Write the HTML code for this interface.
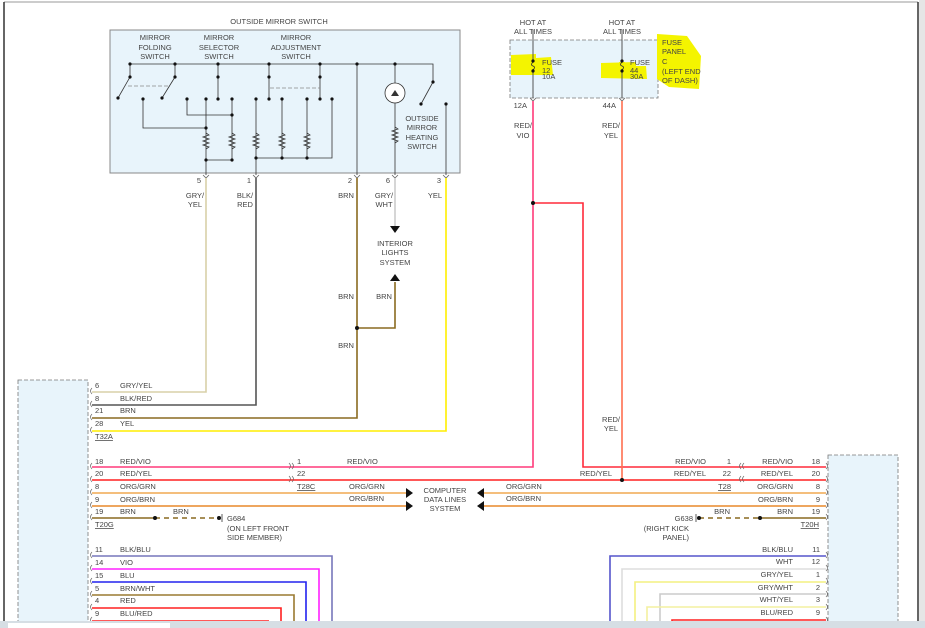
<!DOCTYPE html>
<html><head><meta charset="utf-8"><style>
html,body{margin:0;padding:0;background:#fff;width:925px;height:628px;overflow:hidden}
svg text{font-family:"Liberation Sans",sans-serif;font-size:7.5px;fill:#444}
</style></head><body>
<svg width="925" height="628" viewBox="0 0 925 628" xmlns="http://www.w3.org/2000/svg">
<rect x="0" y="0" width="925" height="628" fill="#fff"/>
<line x1="4" y1="2" x2="918" y2="2" stroke="#999" stroke-width="1"/>
<line x1="4" y1="2" x2="4" y2="628" stroke="#333" stroke-width="1.5"/>
<line x1="918" y1="2" x2="918" y2="628" stroke="#333" stroke-width="1.5"/>
<rect x="919" y="0" width="6" height="628" fill="#e6e6e6"/>

<!-- mirror switch box -->
<text x="279" y="24" text-anchor="middle">OUTSIDE MIRROR SWITCH</text>
<rect x="110" y="30" width="350" height="143" fill="#e8f4fb" stroke="#888" stroke-width="1"/>
<g text-anchor="middle">
<text x="155" y="40">MIRROR</text><text x="155" y="50">FOLDING</text><text x="155" y="59">SWITCH</text>
<text x="219" y="40">MIRROR</text><text x="219" y="50">SELECTOR</text><text x="219" y="59">SWITCH</text>
<text x="296" y="40">MIRROR</text><text x="296" y="50">ADJUSTMENT</text><text x="296" y="59">SWITCH</text>
<text x="422" y="121">OUTSIDE</text><text x="422" y="130">MIRROR</text><text x="422" y="140">HEATING</text><text x="422" y="149">SWITCH</text>
</g>
<g stroke="#333" stroke-width="0.8" fill="none">
<polyline points="130,77 130,64 433,64 433,82"/>
<line x1="175" y1="64" x2="175" y2="77"/>
<line x1="130" y1="77" x2="118" y2="98"/><line x1="175" y1="77" x2="162" y2="98"/>
<line x1="218" y1="64" x2="218" y2="100"/>
<line x1="269" y1="64" x2="269" y2="100"/>
<line x1="320" y1="64" x2="320" y2="100"/>
<line x1="357" y1="64" x2="357" y2="175"/>
<line x1="395" y1="64" x2="395" y2="175"/>
<line x1="433" y1="82" x2="421" y2="104"/>
<line x1="446" y1="104" x2="446" y2="175"/>
<polyline points="143,99 143,128 206,128"/>
<polyline points="187,99 187,115 232,115 232,99"/>
<line x1="206" y1="99" x2="206" y2="175"/>
<line x1="232" y1="115" x2="232" y2="160"/>
<line x1="206" y1="160" x2="232" y2="160"/>
<line x1="256" y1="99" x2="256" y2="175"/>
<line x1="282" y1="99" x2="282" y2="158"/>
<line x1="307" y1="99" x2="307" y2="158"/>
<polyline points="332,99 332,158 256,158"/>
</g>
<g stroke="#888" stroke-width="0.8" stroke-dasharray="4,2"><line x1="128" y1="86" x2="170" y2="86"/><line x1="270" y1="88" x2="320" y2="88"/></g>
<g stroke="#333" stroke-width="0.8" fill="none">
<path d="M206 133 l3 2 -6 2 6 2 -6 2 6 2 -6 2 6 2 -3 2"/>
<path d="M232 133 l3 2 -6 2 6 2 -6 2 6 2 -6 2 6 2 -3 2"/>
<path d="M256 133 l3 2 -6 2 6 2 -6 2 6 2 -6 2 6 2 -3 2"/>
<path d="M282 133 l3 2 -6 2 6 2 -6 2 6 2 -6 2 6 2 -3 2"/>
<path d="M307 133 l3 2 -6 2 6 2 -6 2 6 2 -6 2 6 2 -3 2"/>
<path d="M395 127 l3 2 -6 2 6 2 -6 2 6 2 -6 2 6 2 -3 2"/>
<circle cx="395" cy="93" r="10" fill="#fff"/>
</g>
<path d="M391 96 l4 -6 4 6z" fill="#333"/>
<g fill="#111">
<circle cx="130" cy="64" r="1.6"/><circle cx="175" cy="64" r="1.6"/><circle cx="218" cy="64" r="1.6"/><circle cx="269" cy="64" r="1.6"/><circle cx="320" cy="64" r="1.6"/><circle cx="357" cy="64" r="1.6"/><circle cx="395" cy="64" r="1.6"/>
<circle cx="130" cy="77" r="1.6"/><circle cx="175" cy="77" r="1.6"/><circle cx="118" cy="98" r="1.6"/><circle cx="162" cy="98" r="1.6"/><circle cx="143" cy="99" r="1.6"/>
<circle cx="218" cy="77" r="1.6"/><circle cx="218" cy="99" r="1.6"/><circle cx="187" cy="99" r="1.6"/><circle cx="206" cy="99" r="1.6"/><circle cx="232" cy="99" r="1.6"/><circle cx="232" cy="115" r="1.6"/><circle cx="206" cy="128" r="1.6"/><circle cx="206" cy="160" r="1.6"/><circle cx="232" cy="160" r="1.6"/>
<circle cx="269" cy="77" r="1.6"/><circle cx="320" cy="77" r="1.6"/><circle cx="269" cy="99" r="1.6"/><circle cx="320" cy="99" r="1.6"/><circle cx="256" cy="99" r="1.6"/><circle cx="282" cy="99" r="1.6"/><circle cx="307" cy="99" r="1.6"/><circle cx="332" cy="99" r="1.6"/><circle cx="256" cy="158" r="1.6"/><circle cx="282" cy="158" r="1.6"/><circle cx="307" cy="158" r="1.6"/>
<circle cx="433" cy="82" r="1.6"/><circle cx="421" cy="104" r="1.6"/><circle cx="446" cy="104" r="1.6"/>
</g>
<!-- pins -->
<g stroke="#666" stroke-width="0.8" fill="none">
<path d="M203 175 l3 3 3 -3"/><path d="M253 175 l3 3 3 -3"/><path d="M354 175 l3 3 3 -3"/><path d="M392 175 l3 3 3 -3"/><path d="M443 175 l3 3 3 -3"/>
</g>
<g text-anchor="end"><text x="201" y="183">5</text><text x="251" y="183">1</text><text x="352" y="183">2</text><text x="390" y="183">6</text><text x="441" y="183">3</text></g>
<g text-anchor="middle">
<text x="195" y="198">GRY/</text><text x="195" y="207">YEL</text>
<text x="245" y="198">BLK/</text><text x="245" y="207">RED</text>
<text x="346" y="198">BRN</text>
<text x="384" y="198">GRY/</text><text x="384" y="207">WHT</text>
<text x="435" y="198">YEL</text>
<text x="395" y="246">INTERIOR</text><text x="395" y="255">LIGHTS</text><text x="395" y="265">SYSTEM</text>
<text x="346" y="299">BRN</text><text x="384" y="299">BRN</text><text x="346" y="348">BRN</text>
</g>

<!-- wires from switch -->
<g fill="none" stroke-width="1.6">
<polyline points="206,178 206,392 92,392" stroke="#d8d0a8"/>
<polyline points="256,178 256,405 92,405" stroke="#555"/>
<polyline points="357,178 357,418 92,418" stroke="#8a6a20"/>
<polyline points="446,178 446,431 92,431" stroke="#ffee00"/>
<line x1="395" y1="178" x2="395" y2="226" stroke="#ccc"/>
<polyline points="357,328 395,328 395,282" stroke="#8a6a20"/>
</g>
<circle cx="357" cy="328" r="2" fill="#111"/>
<path d="M390 226 h10 l-5 7z" fill="#111"/>
<path d="M390 281 h10 l-5 -7z" fill="#111"/>

<!-- fuse panel -->
<g text-anchor="middle"><text x="533" y="25">HOT AT</text><text x="533" y="34">ALL TIMES</text><text x="622" y="25">HOT AT</text><text x="622" y="34">ALL TIMES</text></g>
<rect x="510" y="40" width="148" height="58" fill="#e8f4fb" stroke="#777" stroke-width="0.8" stroke-dasharray="4,2"/>
<g fill="#f4f400">
<path d="M511 55 l25 -1 0 4 15 -1 2 18 -42 0z"/>
<path d="M601 63 l35 -1 0 4 10 0 1 13 -46 -1z"/>
<path d="M657 34 l30 2 14 20 -2 33 -30 -2 -12 -8z"/>
</g>
<line x1="533" y1="30" x2="533" y2="98" stroke="#555" stroke-width="1"/>
<line x1="622" y1="30" x2="622" y2="98" stroke="#555" stroke-width="1"/>
<rect x="530" y="62" width="6" height="7" fill="#f4f400"/><rect x="619" y="62" width="6" height="7" fill="#f4f400"/>
<path d="M533 62 q-3 3 0 4 q3 1 0 4" stroke="#333" fill="none" stroke-width="0.8"/>
<path d="M622 62 q-3 3 0 4 q3 1 0 4" stroke="#333" fill="none" stroke-width="0.8"/>
<g fill="#111"><circle cx="533" cy="61" r="1.6"/><circle cx="533" cy="71" r="1.6"/><circle cx="622" cy="61" r="1.6"/><circle cx="622" cy="71" r="1.6"/></g>
<text x="542" y="65">FUSE</text><text x="542" y="73">12</text><text x="542" y="79">10A</text>
<text x="630" y="65">FUSE</text><text x="630" y="73">44</text><text x="630" y="79">30A</text>
<text x="662" y="45">FUSE</text><text x="662" y="54">PANEL</text><text x="662" y="64">C</text><text x="662" y="74">(LEFT END</text><text x="662" y="83">OF DASH)</text>
<g stroke="#666" stroke-width="0.8" fill="none"><path d="M530 98 l3 3 3 -3"/><path d="M619 98 l3 3 3 -3"/></g>
<text x="527" y="108" text-anchor="end">12A</text><text x="616" y="108" text-anchor="end">44A</text>
<g text-anchor="middle"><text x="523" y="128">RED/</text><text x="523" y="138">VIO</text><text x="611" y="128">RED/</text><text x="611" y="138">YEL</text><text x="611" y="422">RED/</text><text x="611" y="431">YEL</text></g>

<!-- left module -->
<rect x="18" y="380" width="70" height="250" fill="#e8f4fb" stroke="#777" stroke-width="0.8" stroke-dasharray="4,2"/>
<rect x="828" y="455" width="70" height="175" fill="#e8f4fb" stroke="#777" stroke-width="0.8" stroke-dasharray="4,2"/>

<!-- red wires -->
<g fill="none" stroke-width="1.6">
<polyline points="533,101 533,467 92,467" stroke="#ff3a7a"/>
<polyline points="533,203 583,203 583,467 826,467" stroke="#ff2a3a"/>
<line x1="622" y1="101" x2="622" y2="480" stroke="#ff7050"/>
<line x1="92" y1="480" x2="826" y2="480" stroke="#ff2020"/>
<line x1="92" y1="493" x2="406" y2="493" stroke="#f0a850"/>
<line x1="92" y1="506" x2="406" y2="506" stroke="#e8882a"/>
<line x1="484" y1="493" x2="826" y2="493" stroke="#f0a850"/>
<line x1="484" y1="506" x2="826" y2="506" stroke="#e8882a"/>
<line x1="92" y1="518" x2="155" y2="518" stroke="#8a6a20"/>
<line x1="155" y1="518" x2="219" y2="518" stroke="#8a6a20" stroke-dasharray="5,4"/>
<line x1="760" y1="518" x2="826" y2="518" stroke="#8a6a20"/>
<line x1="699" y1="518" x2="760" y2="518" stroke="#8a6a20" stroke-dasharray="5,4"/>
<polyline points="92,556 332,556 332,628" stroke="#7777bb"/>
<polyline points="92,569 319,569 319,628" stroke="#ff22ff"/>
<polyline points="92,582 306,582 306,628" stroke="#2222ee"/>
<polyline points="92,595 294,595 294,628" stroke="#9a7a30"/>
<polyline points="92,608 281,608 281,628" stroke="#ff2020"/>
<polyline points="92,621 269,621" stroke="#ff2020"/>
<polyline points="826,556 610,556 610,628" stroke="#5555cc"/>
<polyline points="826,569 622,569 622,628" stroke="#ddd"/>
<polyline points="826,582 635,582 635,628" stroke="#f4f080"/>
<polyline points="826,594 660,594 660,628" stroke="#ccc"/>
<polyline points="826,607 647,607 647,628" stroke="#f4f0a0"/>
<polyline points="826,620 672,620 672,628" stroke="#ff2020"/>
</g>
<circle cx="533" cy="203" r="2" fill="#111"/>
<circle cx="622" cy="480" r="2" fill="#111"/>
<g fill="#111"><circle cx="155" cy="518" r="2"/><circle cx="219" cy="518" r="2"/><circle cx="760" cy="518" r="2"/><circle cx="699" cy="518" r="2"/>
<path d="M406 488 l7 5 -7 5z"/><path d="M406 501 l7 5 -7 5z"/><path d="M484 488 l-7 5 7 5z"/><path d="M484 501 l-7 5 7 5z"/></g>
<g stroke="#333" stroke-width="0.8"><line x1="222" y1="514" x2="222" y2="522"/><line x1="696" y1="514" x2="696" y2="522"/></g>
<g text-anchor="middle"><text x="445" y="493">COMPUTER</text><text x="445" y="502">DATA LINES</text><text x="445" y="511">SYSTEM</text></g>

<!-- connector brackets -->
<g stroke="#666" stroke-width="0.7" fill="none">
<path d="M92 388 q-3 3 0 6 M92 401 q-3 3 0 6 M92 414 q-3 3 0 6 M92 427 q-3 3 0 6 M92 463 q-3 3 0 6 M92 476 q-3 3 0 6 M92 489 q-3 3 0 6 M92 502 q-3 3 0 6 M92 514 q-3 3 0 6 M92 552 q-3 3 0 6 M92 565 q-3 3 0 6 M92 578 q-3 3 0 6 M92 591 q-3 3 0 6 M92 604 q-3 3 0 6 M92 617 q-3 3 0 6"/>
<path d="M826 463 q3 3 0 6 M826 476 q3 3 0 6 M826 489 q3 3 0 6 M826 502 q3 3 0 6 M826 514 q3 3 0 6 M826 552 q3 3 0 6 M826 565 q3 3 0 6 M826 578 q3 3 0 6 M826 591 q3 3 0 6 M826 604 q3 3 0 6 M826 617 q3 3 0 6"/>
<path d="M289 463 q3 3 0 6 M292 463 q3 3 0 6 M289 476 q3 3 0 6 M292 476 q3 3 0 6"/>
<path d="M741 463 q-3 3 0 6 M744 463 q-3 3 0 6 M741 476 q-3 3 0 6 M744 476 q-3 3 0 6"/>
</g>

<!-- left labels -->
<g>
<text x="95" y="388">6</text><text x="120" y="388">GRY/YEL</text>
<text x="95" y="401">8</text><text x="120" y="401">BLK/RED</text>
<text x="95" y="413">21</text><text x="120" y="413">BRN</text>
<text x="95" y="426">28</text><text x="120" y="426">YEL</text>
<text x="95" y="439" text-decoration="underline">T32A</text>
<text x="95" y="464">18</text><text x="120" y="464">RED/VIO</text>
<text x="95" y="476">20</text><text x="120" y="476">RED/YEL</text>
<text x="95" y="489">8</text><text x="120" y="489">ORG/GRN</text>
<text x="95" y="502">9</text><text x="120" y="502">ORG/BRN</text>
<text x="95" y="514">19</text><text x="120" y="514">BRN</text><text x="173" y="514">BRN</text>
<text x="95" y="527" text-decoration="underline">T20G</text>
<text x="297" y="464">1</text><text x="297" y="476">22</text><text x="297" y="489" text-decoration="underline">T28C</text>
<text x="347" y="464">RED/VIO</text><text x="349" y="489">ORG/GRN</text><text x="349" y="501">ORG/BRN</text>
<text x="227" y="521">G684</text><text x="227" y="531">(ON LEFT FRONT</text><text x="227" y="540">SIDE MEMBER)</text>
<text x="95" y="552">11</text><text x="120" y="552">BLK/BLU</text>
<text x="95" y="565">14</text><text x="120" y="565">VIO</text>
<text x="95" y="578">15</text><text x="120" y="578">BLU</text>
<text x="95" y="591">5</text><text x="120" y="591">BRN/WHT</text>
<text x="95" y="603">4</text><text x="120" y="603">RED</text>
<text x="95" y="616">9</text><text x="120" y="616">BLU/RED</text>
<text x="506" y="489">ORG/GRN</text><text x="506" y="501">ORG/BRN</text>
</g>
<g text-anchor="end">
<text x="612" y="476">RED/YEL</text>
<text x="706" y="464">RED/VIO</text><text x="706" y="476">RED/YEL</text>
<text x="731" y="464">1</text><text x="731" y="476">22</text><text x="731" y="489" text-decoration="underline">T28</text>
<text x="793" y="464">RED/VIO</text><text x="793" y="476">RED/YEL</text><text x="793" y="489">ORG/GRN</text><text x="793" y="502">ORG/BRN</text><text x="793" y="514">BRN</text>
<text x="820" y="464">18</text><text x="820" y="476">20</text><text x="820" y="489">8</text><text x="820" y="502">9</text><text x="820" y="514">19</text>
<text x="819" y="527" text-decoration="underline">T20H</text>
<text x="730" y="514">BRN</text>
<text x="693" y="521">G638</text><text x="689" y="531">(RIGHT KICK</text><text x="689" y="540">PANEL)</text>
<text x="793" y="552">BLK/BLU</text><text x="793" y="564">WHT</text><text x="793" y="577">GRY/YEL</text><text x="793" y="590">GRY/WHT</text><text x="793" y="602">WHT/YEL</text><text x="793" y="615">BLU/RED</text>
<text x="820" y="552">11</text><text x="820" y="564">12</text><text x="820" y="577">1</text><text x="820" y="590">2</text><text x="820" y="602">3</text><text x="820" y="615">9</text>
</g>

<!-- bottom bar -->
<rect x="0" y="621" width="925" height="7" fill="#d6dee4"/>
<rect x="8" y="623" width="162" height="5" fill="#fff"/>
</svg>
</body></html>
